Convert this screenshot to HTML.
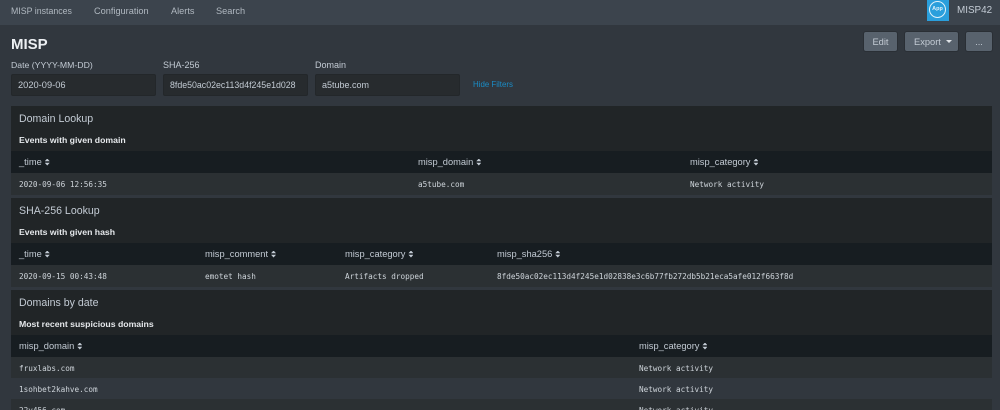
<!DOCTYPE html>
<html><head><meta charset="utf-8"><style>
html,body{margin:0;padding:0;width:1000px;height:410px;overflow:hidden;background:#31373e;font-family:"Liberation Sans",sans-serif;color:#c3cbd4}
.a{position:absolute;white-space:nowrap}
#w{position:absolute;left:0;top:0;width:1000px;height:410px;overflow:hidden;filter:blur(.35px)}
.nav{font-size:9.2px;color:#b0b8c0;top:5px;line-height:12px}
.lab{font-size:9px;color:#c3cbd4;top:59px;line-height:12px}
.inp{top:74px;height:22px;background:#272b2e;border:1px solid #23272a;box-sizing:border-box;border-radius:2px;font-size:9.3px;line-height:20px;padding-left:6px;color:#c3cbd4;overflow:hidden}
.btn{top:32px;height:19px;background:#58626d;border-radius:2px;box-shadow:0 0 0 1px #2a2f35;font-size:9.3px;line-height:20px;text-align:center;color:#c3cbd4}
.p{left:11px;width:981px;background:#212527}
.ttl{font-size:10.6px;color:#c3cbd4;left:19px;line-height:14px}
.sub{font-size:8.7px;font-weight:bold;color:#e6e9ec;left:19px;line-height:12px}
.hd{left:11px;width:981px;height:22px;background:#171d21}
.r1{left:11px;width:981px;background:#2b3033}
.r2{left:11px;width:981px;background:#31373e}
.h{font-size:9.3px;color:#c3cbd4;line-height:12px}
.h::after{content:"";display:inline-block;width:5px;height:7px;margin-left:3px;vertical-align:-0.5px;background:#c3cbd4;clip-path:polygon(50% 0,100% 40%,50% 40%,50% 60%,100% 60%,50% 100%,0 60%,50% 60%,50% 40%,0 40%)}
.m{font-family:"DejaVu Sans Mono",monospace;font-size:7.7px;color:#ced4da;line-height:12px}
</style></head><body><div id="w">
<div class="a" style="left:0;top:0;width:1000px;height:25px;background:#3c444d"></div>
<div class="a nav" style="left:11px;font-size:8.8px">MISP instances</div>
<div class="a nav" style="left:94px">Configuration</div>
<div class="a nav" style="left:171px">Alerts</div>
<div class="a nav" style="left:216px">Search</div>
<div class="a" style="left:927px;top:0;width:22px;height:21px;background:#2a9fdc"></div>
<div class="a" style="left:929px;top:0;width:15px;height:15px;border:1.5px solid #dff1fa;border-radius:50%;margin-top:1px;background:#2a9fdc;font-size:5.5px;font-weight:bold;line-height:15px;text-align:center;color:#dff1fa">App</div>
<div class="a" style="left:957px;top:4px;font-size:9.9px;line-height:13px;color:#c3cbd4">MISP42</div>

<div class="a" style="left:11px;top:36px;font-size:15px;font-weight:bold;color:#eceff2;line-height:18px">MISP</div>
<div class="a btn" style="left:864px;width:33px">Edit</div>
<div class="a btn" style="left:905px;width:53px;text-align:left;padding-left:9px;box-sizing:border-box">Export<span class="a" style="left:41px;top:8px;width:0;height:0;border:3px solid transparent;border-top:3px solid #dfe3e7;border-bottom:0"></span></div>
<div class="a btn" style="left:966px;width:26px">...</div>

<div class="a lab" style="left:11px;font-size:8.7px">Date (YYYY-MM-DD)</div>
<div class="a lab" style="left:163px">SHA-256</div>
<div class="a lab" style="left:315px">Domain</div>
<div class="a inp" style="left:11px;width:145px">2020-09-06</div>
<div class="a inp" style="left:163px;width:145px;font-size:8.8px">8fde50ac02ec113d4f245e1d028</div>
<div class="a inp" style="left:315px;width:145px;font-size:9px">a5tube.com</div>
<div class="a" style="left:473px;top:79px;font-size:7.9px;line-height:11px;color:#1a8cc6">Hide Filters</div>

<div class="a p" style="top:106px;height:89px"></div>
<div class="a ttl" style="top:112px">Domain Lookup</div>
<div class="a sub" style="top:134px">Events with given domain</div>
<div class="a hd" style="top:151px"></div>
<div class="a h" style="left:19px;top:156px">_time</div>
<div class="a h" style="left:418px;top:156px">misp_domain</div>
<div class="a h" style="left:690px;top:156px">misp_category</div>
<div class="a r1" style="top:173px;height:22px"></div>
<div class="a m" style="left:19px;top:179px">2020-09-06 12:56:35</div>
<div class="a m" style="left:418px;top:179px">a5tube.com</div>
<div class="a m" style="left:690px;top:179px">Network activity</div>

<div class="a p" style="top:198px;height:89px"></div>
<div class="a ttl" style="top:204px">SHA-256 Lookup</div>
<div class="a sub" style="top:226px">Events with given hash</div>
<div class="a hd" style="top:243px"></div>
<div class="a h" style="left:19px;top:248px">_time</div>
<div class="a h" style="left:205px;top:248px">misp_comment</div>
<div class="a h" style="left:345px;top:248px">misp_category</div>
<div class="a h" style="left:497px;top:248px">misp_sha256</div>
<div class="a r1" style="top:265px;height:22px"></div>
<div class="a m" style="left:19px;top:271px">2020-09-15 00:43:48</div>
<div class="a m" style="left:205px;top:271px">emotet hash</div>
<div class="a m" style="left:345px;top:271px">Artifacts dropped</div>
<div class="a m" style="left:497px;top:271px">8fde50ac02ec113d4f245e1d02838e3c6b77fb272db5b21eca5afe012f663f8d</div>

<div class="a p" style="top:290px;height:120px"></div>
<div class="a ttl" style="top:296px">Domains by date</div>
<div class="a sub" style="top:318px">Most recent suspicious domains</div>
<div class="a hd" style="top:335px"></div>
<div class="a h" style="left:19px;top:340px">misp_domain</div>
<div class="a h" style="left:639px;top:340px">misp_category</div>
<div class="a r1" style="top:357px;height:21px"></div>
<div class="a m" style="left:19px;top:363px">fruxlabs.com</div>
<div class="a m" style="left:639px;top:363px">Network activity</div>
<div class="a r2" style="top:378px;height:21px"></div>
<div class="a m" style="left:19px;top:384px">1sohbet2kahve.com</div>
<div class="a m" style="left:639px;top:384px">Network activity</div>
<div class="a r1" style="top:399px;height:11px"></div>
<div class="a m" style="left:19px;top:405px">22v456.com</div>
<div class="a m" style="left:639px;top:405px">Network activity</div>
</div></body></html>
